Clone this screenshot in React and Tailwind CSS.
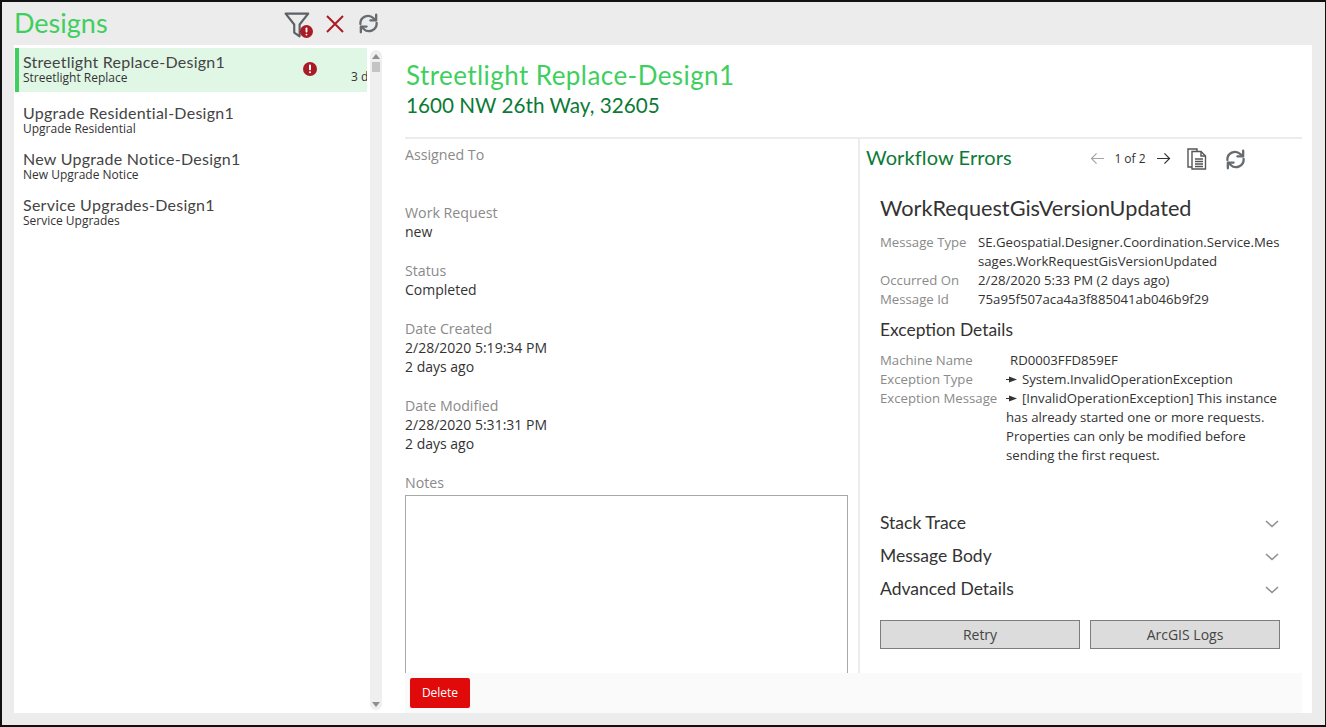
import React from "react";

const HEAD = "font-['Lato','Open_Sans',sans-serif]";

function Refresh({ className }) {
  return (
    <svg viewBox="0 0 24 24" className={className} fill="none" stroke="currentColor" strokeWidth="2.4" strokeLinecap="round" strokeLinejoin="round">
      <path d="M3.5 12.5a8 8 0 0 1 13.5-6.2l2.5 2.2" />
      <path d="M20 2.8v6h-6" />
      <path d="M20.5 11.5a8 8 0 0 1-13.5 6.2l-2.5-2.2" />
      <path d="M4 21.2v-6h6" />
    </svg>
  );
}

function Alert({ className }) {
  return (
    <svg viewBox="0 0 14 14" className={className}>
      <circle cx="7" cy="7" r="7" fill="#a91b25" />
      <rect x="6" y="2.6" width="2" height="5.6" rx="0.8" fill="#fff" />
      <rect x="6" y="9.3" width="2" height="2" rx="1" fill="#fff" />
    </svg>
  );
}

function Pointer() {
  return (
    <svg viewBox="0 0 11 7" className="mr-[5px] inline-block h-[7px] w-[11px] align-[1px]">
      <path d="M0 3h4.500V3.900H0zM3 .5L11 3.500 3 6.500z" fill="#333" />
    </svg>
  );
}

function Field({ label, children, className = "" }) {
  return (
    <div className={className}>
      <div className="text-[14.2px] leading-[19px] text-[#8a8a8a]">{label}</div>
      <div className="text-[14px] leading-[19px] text-[#333]">{children}</div>
    </div>
  );
}

function ListItem({ title, sub, selected }) {
  return (
    <div className={selected ? "relative h-[44px] border-l-[4px] border-[#3ecf5e] bg-[#e0f7e6] pl-[4px] pt-[4px]" : "h-[46px] pl-[8px] pt-[4px]"}>
      <div className={`${HEAD} text-[16px] leading-[20px] tracking-[0.26px] text-[#444]`}>{title}</div>
      <div className="text-[12px] leading-[12px] text-[#333]">{sub}</div>
      {selected && (
        <>
          <Alert className="absolute left-[284px] top-[14px] h-[14px] w-[14px]" />
          <span className="absolute right-0 top-[21px] w-[16px] overflow-hidden whitespace-nowrap text-[12px] leading-[16px] text-[#333]">3 d</span>
        </>
      )}
    </div>
  );
}

function Row({ label, w, children }) {
  return (
    <div className="flex text-[13.2px] leading-[19px]">
      <div className={`shrink-0 text-[#8a8a8a] ${w}`}>{label}</div>
      <div className="min-w-0 break-all text-[#333]">{children}</div>
    </div>
  );
}

function Accordion({ title }) {
  return (
    <div className="flex h-[33px] items-center justify-between pr-[2px]">
      <span className={`${HEAD} text-[17.5px] text-[#333]`}>{title}</span>
      <svg viewBox="0 0 14 8" className="h-[8px] w-[14px]" fill="none" stroke="#8e8e8e" strokeWidth="1.6">
        <path d="M1 1l6 5.5L13 1" />
      </svg>
    </div>
  );
}

export default function App() {
  return (
    <div className="flex h-[727px] w-[1326px] flex-col overflow-hidden border-2 border-b-[2px] border-[#111] border-r-[1px] bg-[#ececec] pl-[12px] pr-[13px] pb-[12px] font-['Open_Sans',sans-serif]">
      <div className="flex h-[43px] shrink-0 items-center">
        <h1 className={`${HEAD} w-[270px] text-[27px] text-[#3fcf5e]`}>Designs</h1>
        <div className="relative mt-[2px] h-[28px] w-[33px]">
          <svg viewBox="0 0 26 26" className="h-[28px] w-[28px] text-[#5d6165]" fill="none" stroke="currentColor" strokeWidth="2">
            <path d="M1.5 2.5h21l-8 10v11l-5-3.500v-7.500z" strokeLinejoin="round" />
          </svg>
          <Alert className="absolute left-[16px] top-[14px] h-[13px] w-[13px]" />
        </div>
        <svg viewBox="0 0 20 20" className="ml-[8px] h-[20px] w-[20px]" fill="none" stroke="#a91b25" strokeWidth="2">
          <path d="M2 2l16 16M18 2L2 18" />
        </svg>
        <Refresh className="ml-[12px] h-[23px] w-[23px] text-[#666b70]" />
      </div>

      <div className="flex min-h-0 flex-1 bg-white">
        <aside className="flex w-[368px] shrink-0">
          <div className="w-[353px] pl-[1px] pt-[3px]">
            <ListItem selected title="Streetlight Replace-Design1" sub="Streetlight Replace" />
            <div className="h-[7px]" />
            <ListItem title="Upgrade Residential-Design1" sub="Upgrade Residential" />
            <ListItem title="New Upgrade Notice-Design1" sub="New Upgrade Notice" />
            <ListItem title="Service Upgrades-Design1" sub="Service Upgrades" />
          </div>
          <div className="ml-[3px] mt-[5px] mb-[3px] flex w-[12px] flex-col items-center rounded-[6px] bg-[#efefef] pt-[4px]">
            <div className="h-0 w-0 border-x-[4px] border-b-[5px] border-x-transparent border-b-[#8f8f8f]" />
            <div className="mt-[3px] h-[10px] w-[8px] bg-[#c4c4c4]" />
            <div className="mt-auto mb-[3px] h-0 w-0 border-x-[4px] border-t-[5px] border-x-transparent border-t-[#8f8f8f]" />
          </div>
        </aside>

        <main className="flex min-w-0 flex-1 flex-col">
          <div className="ml-[23px] mr-[10px] h-[94px] shrink-0 border-b-2 border-[#ececec] pl-[1px] pt-[14px]">
            <div className={`${HEAD} text-[26px] leading-[32px] tracking-[0.43px] text-[#3fcf5e]`}>Streetlight Replace-Design1</div>
            <div className={`${HEAD} text-[20.7px] leading-[28px] text-[#0c7a36]`}>1600 NW 26th Way, 32605</div>
          </div>

          <div className="flex min-h-0 flex-1 overflow-hidden pl-[23px] pr-[10px]">
            <div className="w-[443px] shrink-0 pt-[6px]">
              <Field label="Assigned To" className="h-[58px]" />
              <Field label="Work Request" className="h-[58px]">new</Field>
              <Field label="Status" className="h-[58px]">Completed</Field>
              <Field label="Date Created" className="h-[77px]">
                2/28/2020 5:19:34 PM<br />2 days ago
              </Field>
              <Field label="Date Modified" className="h-[77px]">
                2/28/2020 5:31:31 PM<br />2 days ago
              </Field>
              <div className="h-[22px] text-[14.2px] leading-[19px] text-[#8a8a8a]">Notes</div>
              <div className="h-[240px] border border-[#a8a8a8] bg-white" />
            </div>

            <section className="ml-[10px] flex-1 border-l-2 border-[#ececec] pt-[5px]">
              <div className="flex h-[26px] items-center pl-[6px]">
                <span className={`${HEAD} w-[224px] text-[20px] tracking-[0.1px] text-[#0c7a36]`}>Workflow Errors</span>
                <svg viewBox="0 0 16 14" className="mt-[3px] h-[13px] w-[15px]" fill="none" stroke="#a6a6a6" strokeWidth="1.3">
                  <path d="M15 7H1.500M7 1.500L1.500 7 7 12.500" />
                </svg>
                <span className="ml-[6px] mt-[3px] w-[38px] text-center text-[12px] text-[#333]">1 of 2</span>
                <svg viewBox="0 0 16 14" className="ml-[7px] mt-[3px] h-[13px] w-[15px]" fill="none" stroke="#333" strokeWidth="1.3">
                  <path d="M1 7h13.500M9 1.500L14.500 7 9 12.500" />
                </svg>
                <svg viewBox="0 0 20 22" className="ml-[16px] mt-[3px] h-[22px] w-[20px]" fill="#fff" stroke="#555" strokeWidth="1.400">
                  <path d="M1 1h9v18H1z" />
                  <path d="M5 3.500h9l4.500 4.500v13H5z" />
                  <path d="M14 3.500V8h4.500M8 11h8M8 13.500h8M8 16h8M8 18.500h8" fill="none" />
                </svg>
                <Refresh className="ml-[17px] mt-[4px] h-[23px] w-[23px] text-[#666b70]" />
              </div>

              <div className="pl-[20px] pr-[21px]">
                <h2 className={`${HEAD} mt-[23px] text-[21.7px] leading-[30px] text-[#333]`}>WorkRequestGisVersionUpdated</h2>
                <div className="mt-[10px]">
                  <Row label="Message Type" w="w-[98px]">SE.Geospatial.Designer.Coordination.Service.Messages.WorkRequestGisVersionUpdated</Row>
                  <Row label="Occurred On" w="w-[98px]">2/28/2020 5:33 PM (2 days ago)</Row>
                  <Row label="Message Id" w="w-[98px]">75a95f507aca4a3f885041ab046b9f29</Row>
                </div>
                <h3 className={`${HEAD} mt-[9px] text-[17.4px] leading-[24px] text-[#333]`}>Exception Details</h3>
                <div className="mt-[9px]">
                  <Row label="Machine Name" w="w-[130px]">RD0003FFD859EF</Row>
                  <Row label="Exception Type" w="w-[126px]"><Pointer />System.InvalidOperationException</Row>
                  <div className="flex text-[13.2px] leading-[19px]">
                    <div className="w-[126px] shrink-0 text-[#8a8a8a]">Exception Message</div>
                    <div className="text-[#333]"><Pointer />[InvalidOperationException] This instance has already started one or more requests. Properties can only be modified before sending the first request.</div>
                  </div>
                </div>
                <div className="mt-[42px]">
                  <Accordion title="Stack Trace" />
                  <Accordion title="Message Body" />
                  <Accordion title="Advanced Details" />
                </div>
                <div className="mt-[14px] flex gap-[10px]">
                  <button className="h-[29px] w-[200px] border border-[#7d7d7d] bg-[#dcdcdc] text-[14px] text-[#444]">Retry</button>
                  <button className="h-[29px] w-[190px] border border-[#7d7d7d] bg-[#dcdcdc] text-[14px] text-[#444]">ArcGIS Logs</button>
                </div>
              </div>
            </section>
          </div>

          <div className="ml-[23px] mr-[10px] flex h-[40px] shrink-0 items-center bg-[#fafafa] pl-[5px]">
            <button className="h-[30px] w-[60px] rounded-[2px] bg-[#e00a0a] text-[12px] text-white">Delete</button>
          </div>
        </main>
      </div>
    </div>
  );
}
